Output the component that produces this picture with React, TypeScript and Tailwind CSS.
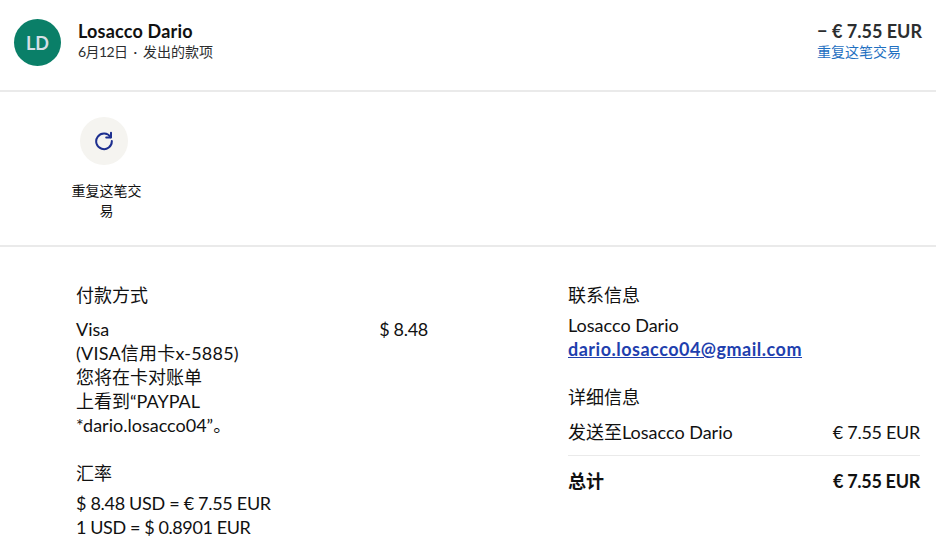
import React from "react";

const font = { fontFamily: '"Lato", "Noto Sans CJK SC", sans-serif' };

function Row({ left, right, bold }: { left: string; right: string; bold?: boolean }) {
  return (
    <div className={`flex justify-between ${bold ? "font-bold" : ""}`}>
      <span>{left}</span>
      <span className="tracking-[-0.3px]">{right}</span>
    </div>
  );
}

export default function App() {
  return (
    <div className="w-[936px] h-[544px] overflow-hidden bg-white text-[#111] text-[18px] leading-6" style={font}>
      <header className="h-[92px] border-b-2 border-[#eaeaea] flex items-start justify-between px-[14px] pt-[19px]">
        <div className="flex items-start gap-[17px]">
          <div className="w-[47px] h-[47px] rounded-full bg-[#0a7f68] text-[#d5dfe6] flex items-center justify-center text-[18px] font-bold">LD</div>
          <div>
            <div className="text-[18px] leading-6 font-bold tracking-[0.2px]">Losacco Dario</div>
            <div className="text-[14px] leading-[20px] -mt-[1px] text-[#2c2e2f]"><span className="tracking-[-0.6px]">6月12日</span><span className="mx-[6px]">·</span>发出的款项</div>
          </div>
        </div>
        <div>
          <div className="text-[18px] leading-6 font-bold text-[#2c2e2f]">− € 7.55 EUR</div>
          <div className="text-[14px] leading-[20px] -mt-[1px] text-[#1f70c1]">重复这笔交易</div>
        </div>
      </header>

      <section className="h-[155px] border-b-2 border-[#eaeaea] pl-[68px] pt-[25px]">
        <div className="w-[72px] flex flex-col items-center text-center">
          <div className="w-[48px] h-[48px] rounded-full bg-[#f5f4f0] flex items-center justify-center">
            <svg width="20" height="20" viewBox="0 0 20 20" fill="none" stroke="#1d2f8f" strokeWidth="2" strokeLinecap="round" strokeLinejoin="round">
              <path d="M16.6 6.2A7.8 7.8 0 1 0 17.8 10" />
              <path d="M17 1.8V6.6H12.2" />
            </svg>
          </div>
          <div className="mt-[16px] ml-[5px] w-[72px] shrink-0 text-[14px] leading-[20px]">重复这笔交易</div>
        </div>
      </section>

      <main className="flex pl-[76px] pr-[16px] pt-[36px]">
        <div className="w-[352px] shrink-0">
          <h3 className="text-[18px] leading-6 font-normal">付款方式</h3>
          <div className="mt-[10px] flex justify-between">
            <div className="w-[200px]">
              Visa<br /><span className="tracking-[0.2px]">(VISA信用卡x-5885)</span><br />您将在卡对账单<br />上看到“PAYPAL<br />*dario.losacco04”。
            </div>
            <div className="tracking-[-0.3px]">$ 8.48</div>
          </div>
          <h3 className="mt-[24px] text-[18px] leading-6 font-normal">汇率</h3>
          <div className="mt-[6px] tracking-[-0.3px]">$ 8.48 USD = € 7.55 EUR<br /><span className="tracking-[-0.4px]">1 USD = $ 0.8901 EUR</span></div>
        </div>
        <div className="ml-[140px] flex-1">
          <h3 className="text-[18px] leading-6 font-normal">联系信息</h3>
          <div className="mt-[6px]">Losacco Dario</div>
          <a className="font-bold text-[#1f3fae] underline tracking-[0.5px]">dario.losacco04@gmail.com</a>
          <h3 className="mt-[24px] text-[18px] leading-6 font-normal">详细信息</h3>
          <div className="mt-[11px]"><Row left="发送至Losacco Dario" right="€ 7.55 EUR" /></div>
          <div className="mt-[11px] border-t border-[#eaeaea] pt-[13px]"><Row left="总计" right="€ 7.55 EUR" bold /></div>
        </div>
      </main>
    </div>
  );
}
